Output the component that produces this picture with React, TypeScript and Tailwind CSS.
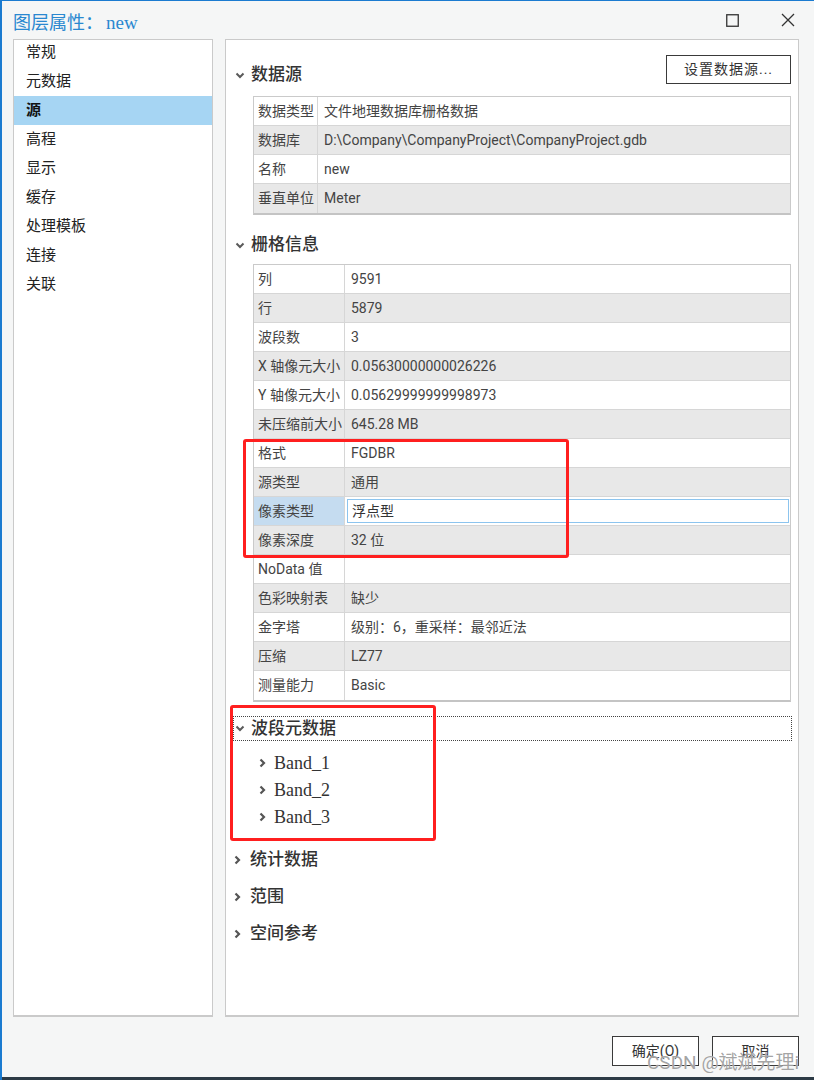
import React from 'react';

const rowBase = 'flex h-[29px] border-b border-[#d6d6d6] items-center text-[14px]';

function ChevronDown() {
  return (
    <svg width="10" height="7" viewBox="0 0 10 7" className="shrink-0">
      <path d="M1.5 1.5 L5 5 L8.5 1.5" fill="none" stroke="#5a5a5a" strokeWidth="2" />
    </svg>
  );
}

function ChevronRight() {
  return (
    <svg width="7" height="10" viewBox="0 0 7 10" className="shrink-0">
      <path d="M1.5 1.5 L5 5 L1.5 8.5" fill="none" stroke="#555" strokeWidth="2.2" />
    </svg>
  );
}

type Row = { k: string; v: string };

const sourceRows: Row[] = [
  { k: '数据类型', v: '文件地理数据库栅格数据' },
  { k: '数据库', v: 'D:\\Company\\CompanyProject\\CompanyProject.gdb' },
  { k: '名称', v: 'new' },
  { k: '垂直单位', v: 'Meter' },
];

const rasterRows: Row[] = [
  { k: '列', v: '9591' },
  { k: '行', v: '5879' },
  { k: '波段数', v: '3' },
  { k: 'X 轴像元大小', v: '0.05630000000026226' },
  { k: 'Y 轴像元大小', v: '0.05629999999998973' },
  { k: '未压缩前大小', v: '645.28 MB' },
  { k: '格式', v: 'FGDBR' },
  { k: '源类型', v: '通用' },
  { k: '像素类型', v: '浮点型' },
  { k: '像素深度', v: '32 位' },
  { k: 'NoData 值', v: '' },
  { k: '色彩映射表', v: '缺少' },
  { k: '金字塔', v: '级别：6，重采样：最邻近法' },
  { k: '压缩', v: 'LZ77' },
  { k: '测量能力', v: 'Basic' },
];

const navItems = ['常规', '元数据', '源', '高程', '显示', '缓存', '处理模板', '连接', '关联'];

function PropTable({ rows, labelW, selected }: { rows: Row[]; labelW: string; selected?: string }) {
  return (
    <div className="border border-[#cacaca] border-b-2 border-b-[#c4c4c4]">
      {rows.map((r, i) => {
        const gray = i % 2 === 1;
        const sel = r.k === selected;
        return (
          <div key={r.k} className={`${rowBase} ${i === rows.length - 1 ? 'border-b-0' : ''} ${gray ? 'bg-[#e8e8e8]' : 'bg-white'}`}>
            <div className={`${labelW} h-full flex items-center pl-[4px] border-r border-[#d6d6d6] text-[#444] whitespace-nowrap overflow-hidden ${sel ? 'bg-[#c5dcf0]' : ''}`}>
              {r.k}
            </div>
            {sel ? (
              <div className="flex-1 h-full p-[2px] pr-[1px]">
                <div className="h-full bg-white border border-[#8cc4ee] flex items-center pl-[4px] text-[#333]">{r.v}</div>
              </div>
            ) : (
              <div className="flex-1 pl-[6px] text-[#444] whitespace-nowrap">{r.v}</div>
            )}
          </div>
        );
      })}
    </div>
  );
}

export default function App() {
  return (
    <div className="relative w-[814px] h-[1080px] bg-[#f5f6f6] border-l-2 border-t border-[#1b7bd0] flex flex-col font-['Roboto','Noto_Sans_CJK_SC',sans-serif] text-[#333] overflow-hidden">
      {/* title bar */}
      <div className="h-[38px] shrink-0 flex items-center pt-[4px] pl-[11px] pr-[19px]">
        <span className="text-[18px] text-[#2a88d0] leading-none">
          图层属性：<span className="font-['Liberation_Serif',serif] text-[19px] ml-[3px]">new</span>
        </span>
        <div className="ml-auto flex items-center gap-[42px] -mt-[4px]">
          <svg width="13" height="13" viewBox="0 0 13 13">
            <rect x="0.75" y="0.75" width="11.5" height="11.5" fill="none" stroke="#333" strokeWidth="1.3" />
          </svg>
          <svg width="14" height="14" viewBox="0 0 14 14">
            <path d="M1 1 L13 13 M13 1 L1 13" stroke="#333" strokeWidth="1.3" />
          </svg>
        </div>
      </div>

      {/* body */}
      <div className="flex h-[978px] shrink-0 pl-[11px] gap-[12px]">
        {/* nav */}
        <div className="w-[200px] border border-[#cacaca] border-b-2 bg-white">
          <div className="-mt-[2px]">
            {navItems.map((n) => (
              <div
                key={n}
                className={`h-[29px] flex items-center pl-[12px] text-[15px] ${n === '源' ? 'bg-[#a6d5f3] font-bold text-[#111]' : 'text-[#222]'}`}
              >
                {n}
              </div>
            ))}
          </div>
        </div>

        {/* content */}
        <div className="w-[574px] border border-[#cacaca] border-b-2 bg-white flex flex-col">
          <div className="pl-[27px] pr-[7px]">
            <div className="flex items-start pt-[15px] -ml-[18px]">
              <div className="mt-[8px] h-[24px] flex items-center gap-[6px]">
                <ChevronDown />
                <span className="text-[17px] font-medium text-[#333]">数据源</span>
              </div>
              <div className="ml-auto w-[125px] h-[29px] border border-[#3a3a3a] bg-white flex items-center justify-center text-[14px] text-[#333] tracking-[1px]">
                设置数据源...
              </div>
            </div>
            <div className="mt-[9px]">
              <PropTable rows={sourceRows} labelW="w-[64px]" />
            </div>

            <div className="mt-[18px] h-[24px] flex items-center gap-[6px] -ml-[18px]">
              <ChevronDown />
              <span className="text-[17px] font-medium text-[#333]">栅格信息</span>
            </div>
            <div className="mt-[7px]">
              <PropTable rows={rasterRows} labelW="w-[91px]" selected="像素类型" />
            </div>
          </div>

          <div className="mt-[14px] ml-[7px] mr-[6px] h-[25px] border border-dotted border-[#444] flex items-center gap-[6px] pl-[1px]">
            <ChevronDown />
            <span className="text-[17px] font-medium text-[#333]">波段元数据</span>
          </div>
          <div className="mt-[8px]">
            {['Band_1', 'Band_2', 'Band_3'].map((b) => (
              <div key={b} className="h-[27px] flex items-center pl-[33px] gap-[8px]">
                <ChevronRight />
                <span className="font-['Liberation_Serif',serif] text-[18px] leading-none text-[#333]">{b}</span>
              </div>
            ))}
          </div>
          <div className="mt-[11px]">
            {['统计数据', '范围', '空间参考'].map((h) => (
              <div key={h} className="h-[37px] flex items-center pl-[8px] gap-[9px]">
                <ChevronRight />
                <span className="text-[17px] font-medium text-[#333]">{h}</span>
              </div>
            ))}
          </div>
        </div>
      </div>

      {/* footer */}
      <div className="flex-1 flex justify-end items-start pt-[19px] pr-[15px] gap-[13px]">
        <div className="w-[87px] h-[30px] border border-[#3a3a3a] bg-white flex items-center justify-center text-[14px] text-[#333]">确定(O)</div>
        <div className="w-[87px] h-[30px] border border-[#3a3a3a] bg-white flex items-center justify-center text-[14px] text-[#333]">取消</div>
      </div>
      <div className="h-[3px] shrink-0 bg-[#2c3a45] -ml-[2px]" />

      {/* annotations */}
      <div className="absolute left-[241px] top-[438px] w-[326px] h-[119px] border-[3px] border-[#ff1f1f] rounded-[3px]" />
      <div className="absolute left-[228px] top-[704px] w-[206px] h-[136px] border-[3px] border-[#ff1f1f] rounded-[3px]" />
      <div className="absolute left-[645px] top-[1052px] text-[19px] leading-[19px] text-[#8c8c8c]/80 whitespace-nowrap [text-shadow:0_0_1px_#fff]">
        CSDN @斌斌先理i
      </div>
    </div>
  );
}
